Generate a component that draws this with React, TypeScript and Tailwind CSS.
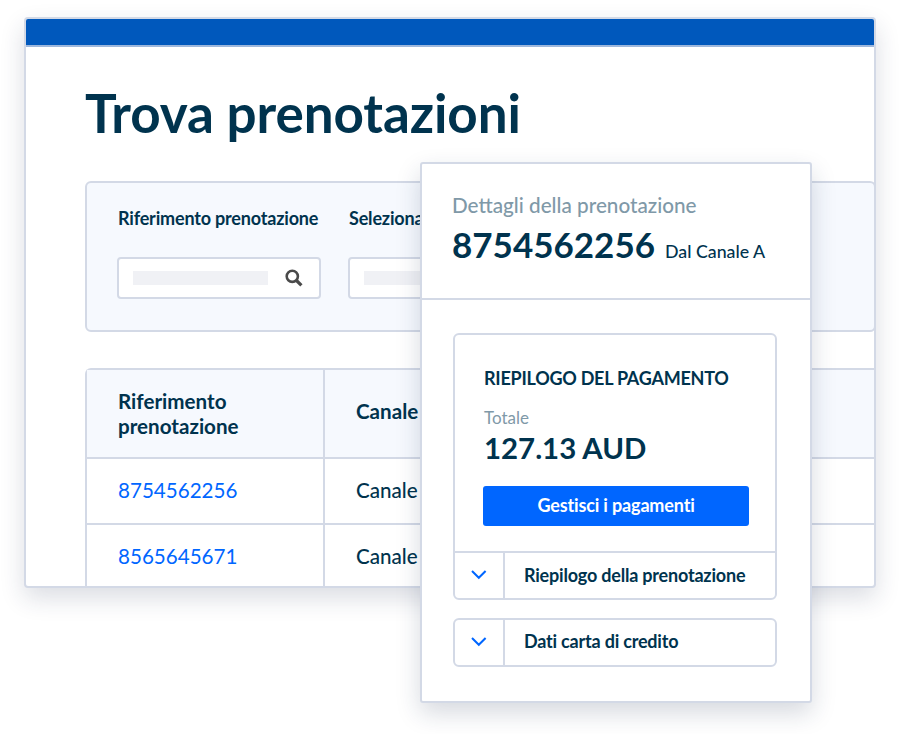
import React from "react";

const Chevron = () => (
  <svg width="16" height="10" viewBox="0 0 16 10" fill="none" stroke="#0066ff" strokeWidth="2">
    <path d="M1 1 L7.8 7.8 L14.6 1" />
  </svg>
);

const SearchIcon = () => (
  <svg width="18" height="18" viewBox="0 0 18 18" fill="none" stroke="#4a4a4a">
    <circle cx="7.3" cy="7.3" r="5.6" strokeWidth="2.6" />
    <path d="M11.5 11.5 L16.4 16.4" strokeWidth="3.2" />
  </svg>
);

export default function App() {
  return (
    <div className="relative w-[900px] h-[734px] bg-white overflow-hidden pt-[17px] pl-[24px] font-['Lato',sans-serif] text-[#00334e]">
      <div className="w-[852px] h-[571px] rounded-[4px] border-2 border-[#d3d9e6] bg-white overflow-hidden shadow-[0_10px_24px_rgba(30,45,80,0.16)] box-border">
        <div className="h-[28px] bg-[#0058bc] border-b-2 border-[#9db7dc]" />
        <div className="pl-[59px]">
          <h1 className="mt-[33px] text-[53px] leading-[66px] font-bold tracking-[-0.1px] whitespace-nowrap">Trova prenotazioni</h1>
          <div className="mt-[35px] w-[791px] h-[151px] rounded-[6px] border-2 border-[#d3d9e6] bg-[#f6f9fe] flex gap-[27px] pl-[30px] pt-[23px]">
            <div className="w-[204px]">
              <div className="pl-[1px] text-[18px] leading-[24px] font-bold tracking-[-0.18px] whitespace-nowrap">Riferimento prenotazione</div>
              <div className="mt-[27px] h-[42px] w-[204px] rounded-[4px] border-2 border-[#d3d9e6] bg-white flex items-center pl-[14px] pr-[16px] justify-between">
                <div className="w-[135px] h-[14px] bg-[#f0f1f5]" />
                <SearchIcon />
              </div>
            </div>
            <div className="w-[204px]">
              <div className="pl-[1px] text-[18px] leading-[24px] font-bold tracking-[-0.18px] whitespace-nowrap">Seleziona canale</div>
              <div className="mt-[27px] h-[42px] w-[204px] rounded-[4px] border-2 border-[#d3d9e6] bg-white flex items-center pl-[14px]">
                <div className="w-[135px] h-[14px] bg-[#f0f1f5]" />
              </div>
            </div>
          </div>
          <div className="mt-[36px] rounded-tl-[6px] border-l-2 border-t-2 border-[#d3d9e6] h-[221px] text-[20.6px]">
            <div className="flex h-[89px] bg-[#f6f9fe] border-b-2 border-[#d3d9e6]">
              <div className="w-[238px] border-r-2 border-[#d3d9e6] pl-[31px] pt-[1px] flex items-center font-bold leading-[25px]">
                Riferimento<br />prenotazione
              </div>
              <div className="pl-[31px] pb-[4px] flex items-center font-bold">Canale</div>
            </div>
            <div className="flex h-[66px] border-b-2 border-[#d3d9e6] items-stretch">
              <div className="w-[238px] border-r-2 border-[#d3d9e6] pl-[31px] pb-[2px] flex items-center text-[#0066ff]">8754562256</div>
              <div className="pl-[31px] pb-[2px] flex items-center font-medium">Canale</div>
            </div>
            <div className="flex h-[62px]">
              <div className="w-[238px] border-r-2 border-[#d3d9e6] pl-[31px] flex items-center text-[#0066ff]">8565645671</div>
              <div className="pl-[31px] flex items-center font-medium">Canale</div>
            </div>
          </div>
        </div>
      </div>

      <div className="absolute left-[420px] top-[162px] w-[392px] h-[541px] rounded-[3px] border-2 border-[#d3d9e6] bg-white shadow-[0_10px_24px_rgba(30,45,80,0.18)] box-border">
        <div className="h-[136px] border-b-2 border-[#d3d9e6] pl-[30px] pt-[28px]">
          <div className="text-[20.7px] leading-[26px] font-medium text-[#7f99a8] whitespace-nowrap">Dettagli della prenotazione</div>
          <div className="flex items-baseline mt-[4px]">
            <span className="text-[35px] leading-[44px] font-bold">8754562256</span>
            <span className="ml-[10px] text-[17.8px] font-medium">Dal Canale A</span>
          </div>
        </div>
        <div className="pt-[33px] pl-[31px]">
          <div className="w-[324px] h-[267px] rounded-[6px] border-2 border-[#d3d9e6] box-border">
            <div className="h-[216px] pl-[29px] pt-[31px]">
              <div className="text-[18px] leading-[24px] font-bold tracking-[-0.25px] whitespace-nowrap">RIEPILOGO DEL PAGAMENTO</div>
              <div className="mt-[17px] text-[17px] leading-[22px] text-[#7f99a8]">Totale</div>
              <div className="text-[29.4px] leading-[38px] font-bold">127.13 AUD</div>
              <div className="-ml-[1px] mt-[19px] w-[266px] h-[40px] rounded-[3px] bg-[#0066ff] text-white text-[18px] font-bold tracking-[-0.15px] pb-[1px] flex items-center justify-center">Gestisci i pagamenti</div>
            </div>
            <div className="flex h-[47px] border-t-2 border-[#d3d9e6]">
              <div className="w-[50px] border-r-2 border-[#d3d9e6] pb-[1px] flex items-center justify-center"><Chevron /></div>
              <div className="pl-[19px] pb-[1px] flex items-center text-[18px] font-bold tracking-[-0.2px] whitespace-nowrap">Riepilogo della prenotazione</div>
            </div>
          </div>
          <div className="flex w-[324px] h-[49px] mt-[18px] rounded-[6px] border-2 border-[#d3d9e6] box-border">
            <div className="w-[50px] border-r-2 border-[#d3d9e6] pb-[1px] flex items-center justify-center"><Chevron /></div>
            <div className="pl-[19px] pb-[2px] flex items-center text-[18px] font-bold tracking-[-0.2px] whitespace-nowrap">Dati carta di credito</div>
          </div>
        </div>
      </div>
    </div>
  );
}
